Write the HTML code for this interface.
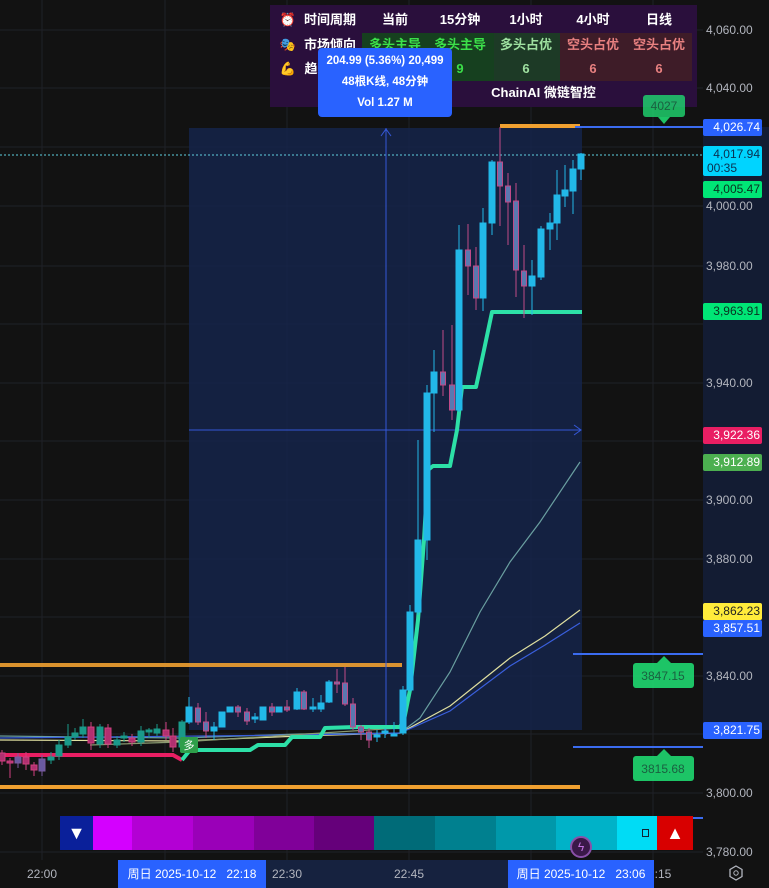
<!DOCTYPE html>
<html><head><meta charset="utf-8"><style>
body{margin:0;width:769px;height:888px;overflow:hidden;background:#121212;font-family:"Liberation Sans","Noto Sans CJK SC",sans-serif;position:relative}
.ax{position:absolute;left:706px;font-size:12px;color:#b2b5be}
.lb{position:absolute;left:703px;width:59px;height:17px;font-size:12px;line-height:17px;text-align:right;padding-right:2px;box-sizing:border-box;border-radius:2px}
.tb{position:absolute;left:270px;top:5px;width:427px;height:102px;background:#2a0f3c;color:#fff;font-weight:bold;font-size:13px}
.r{position:absolute;left:0;width:427px;height:24px;line-height:24px}
.r span{position:absolute;text-align:center;width:66px}
.seg{position:absolute;top:816px;height:34px}
</style></head><body>
<svg width="769" height="888" style="position:absolute;left:0;top:0">
<rect x="703" y="127" width="66" height="603" fill="#131c33"/>
<g stroke="#1f2128" stroke-width="1">
<line x1="42" y1="0" x2="42" y2="860"/><line x1="165" y1="0" x2="165" y2="860"/><line x1="287" y1="0" x2="287" y2="860"/><line x1="409" y1="0" x2="409" y2="860"/><line x1="531" y1="0" x2="531" y2="860"/><line x1="653" y1="0" x2="653" y2="860"/>
<line x1="0" y1="30" x2="703" y2="30"/><line x1="0" y1="88" x2="703" y2="88"/><line x1="0" y1="147" x2="703" y2="147"/><line x1="0" y1="206" x2="703" y2="206"/><line x1="0" y1="266" x2="703" y2="266"/><line x1="0" y1="324" x2="703" y2="324"/><line x1="0" y1="383" x2="703" y2="383"/><line x1="0" y1="441" x2="703" y2="441"/><line x1="0" y1="500" x2="703" y2="500"/><line x1="0" y1="559" x2="703" y2="559"/><line x1="0" y1="617" x2="703" y2="617"/><line x1="0" y1="676" x2="703" y2="676"/><line x1="0" y1="734" x2="703" y2="734"/><line x1="0" y1="793" x2="703" y2="793"/><line x1="0" y1="852" x2="703" y2="852"/>
</g>
<rect x="189" y="128" width="393" height="602" fill="#15254a" fill-opacity="0.85"/>
<line x1="0" y1="155" x2="703" y2="155" stroke="#5fd0e0" stroke-width="1" stroke-dasharray="2,2"/>
<line x1="0" y1="665" x2="402" y2="665" stroke="#f0a030" stroke-width="4" opacity="0.9"/>
<line x1="0" y1="787" x2="580" y2="787" stroke="#f0a030" stroke-width="4"/>
<line x1="500" y1="126" x2="580" y2="126" stroke="#f0a030" stroke-width="4"/>
<g stroke="#3b6cf0" stroke-width="2"><line x1="575" y1="127" x2="703" y2="127"/><line x1="573" y1="654" x2="703" y2="654"/><line x1="573" y1="747" x2="703" y2="747"/><line x1="680" y1="818" x2="703" y2="818"/></g>
<g stroke="#3558d8" stroke-width="1" fill="none"><line x1="386" y1="128" x2="386" y2="735"/><path d="M381,136 L386,129 L391,136"/><line x1="189" y1="430" x2="580" y2="430"/><path d="M574,425 L581,430 L574,435"/></g>
<g fill="none" stroke-width="1.2">
<path d="M0,736 L180,738 L300,734 L400,733 L420,718 L450,672 L480,612 L510,562 L540,522 L580,462" stroke="#6a9fa0"/>
<path d="M0,740 L180,741 L300,736 L400,733 L450,706 L510,658 L545,636 L580,610" stroke="#e0e0a0"/>
<path d="M0,738 L300,735 L400,733 L450,711 L510,666 L545,645 L580,623" stroke="#3a5fdc"/>
<path d="M90,745 L180,742 L400,728" stroke="#8a9a70"/>
</g>
<path d="M0,755 L173,755 L182,760" stroke="#e91e63" stroke-width="4" fill="none"/>
<path d="M182,760 L190,750 L250,750 L258,745 L285,745 L292,737 L320,737 L325,728 L355,727 L400,727 L404,720 L410,690 L418,620 L424,540 L428,470 L433,466 L450,466 L457,430 L462,387 L476,387 L484,350 L492,312 L582,312" stroke="#2de0a7" stroke-width="4" fill="none" stroke-linejoin="round"/>
<g stroke-width="1">
<g stroke="#d04080" fill="#b03070"><line x1="2" y1="750" x2="2" y2="765"/><rect x="-1" y="753" width="6" height="8"/><line x1="10" y1="758" x2="10" y2="778"/><rect x="7" y="761" width="6" height="2"/><line x1="26" y1="752" x2="26" y2="770"/><rect x="23" y="757" width="6" height="7"/><line x1="34" y1="762" x2="34" y2="776"/><rect x="31" y="765" width="6" height="5"/><line x1="91" y1="722" x2="91" y2="750"/><rect x="88" y="727" width="6" height="16"/><line x1="108" y1="724" x2="108" y2="748"/><rect x="105" y="728" width="6" height="16"/><line x1="132" y1="734" x2="132" y2="746"/><rect x="129" y="738" width="6" height="4"/><line x1="166" y1="722" x2="166" y2="740"/><rect x="163" y="730" width="6" height="6"/><line x1="173" y1="728" x2="173" y2="752"/><rect x="170" y="736" width="6" height="11"/></g>
<g stroke="#7a5aa0" fill="#6a5aa0"><line x1="18" y1="753" x2="18" y2="768"/><rect x="15" y="757" width="6" height="6"/><line x1="42" y1="755" x2="42" y2="776"/><rect x="39" y="759" width="6" height="12"/></g>
<g stroke="#1a9a8a" fill="#1a9a8a"><line x1="51" y1="752" x2="51" y2="764"/><rect x="48" y="757" width="6" height="3"/><line x1="59" y1="740" x2="59" y2="760"/><rect x="56" y="745" width="6" height="11"/><line x1="68" y1="724" x2="68" y2="748"/><rect x="65" y="737" width="6" height="8"/><line x1="75" y1="728" x2="75" y2="740"/><rect x="72" y="733" width="6" height="4"/><line x1="83" y1="719" x2="83" y2="738"/><rect x="80" y="727" width="6" height="7"/><line x1="100" y1="724" x2="100" y2="748"/><rect x="97" y="727" width="6" height="17"/><line x1="117" y1="736" x2="117" y2="748"/><rect x="114" y="740" width="6" height="5"/><line x1="124" y1="732" x2="124" y2="742"/><rect x="121" y="736" width="6" height="2"/><line x1="141" y1="726" x2="141" y2="746"/><rect x="138" y="731" width="6" height="11"/><line x1="149" y1="728" x2="149" y2="738"/><rect x="146" y="730" width="6" height="2"/><line x1="157" y1="724" x2="157" y2="736"/><rect x="154" y="729" width="6" height="4"/><line x1="182" y1="720" x2="182" y2="750"/><rect x="179" y="722" width="6" height="25"/></g>
<g stroke="#22b8e8" fill="#22b8e8"><line x1="189" y1="697" x2="189" y2="724"/><rect x="186" y="707" width="6" height="15"/><line x1="214" y1="722" x2="214" y2="740"/><rect x="211" y="727" width="6" height="4"/><line x1="222" y1="712" x2="222" y2="727"/><rect x="219" y="712" width="6" height="15"/><rect x="227" y="707" width="6" height="5"/><line x1="255" y1="713" x2="255" y2="723"/><rect x="252" y="717" width="6" height="2"/><line x1="263" y1="707" x2="263" y2="720"/><rect x="260" y="707" width="6" height="13"/><rect x="276" y="707" width="6" height="5"/><line x1="297" y1="688" x2="297" y2="710"/><rect x="294" y="692" width="6" height="17"/><line x1="313" y1="698" x2="313" y2="712"/><rect x="310" y="707" width="6" height="2"/><line x1="321" y1="695" x2="321" y2="712"/><rect x="318" y="703" width="6" height="6"/><line x1="329" y1="680" x2="329" y2="703"/><rect x="326" y="682" width="6" height="20"/><line x1="377" y1="730" x2="377" y2="742"/><rect x="374" y="735" width="6" height="2"/><line x1="385" y1="728" x2="385" y2="738"/><rect x="382" y="731" width="6" height="2"/><line x1="394" y1="722" x2="394" y2="736"/><rect x="391" y="734" width="6" height="2"/><line x1="403" y1="686" x2="403" y2="735"/><rect x="400" y="690" width="6" height="43"/><line x1="410" y1="605" x2="410" y2="692"/><rect x="407" y="612" width="6" height="78"/><line x1="418" y1="440" x2="418" y2="615"/><rect x="415" y="540" width="6" height="72"/><line x1="427" y1="385" x2="427" y2="560"/><rect x="424" y="393" width="6" height="147"/><line x1="434" y1="350" x2="434" y2="432"/><rect x="431" y="372" width="6" height="21"/><line x1="459" y1="225" x2="459" y2="412"/><rect x="456" y="250" width="6" height="160"/><line x1="483" y1="208" x2="483" y2="311"/><rect x="480" y="223" width="6" height="75"/><line x1="492" y1="160" x2="492" y2="235"/><rect x="489" y="162" width="6" height="61"/><line x1="532" y1="260" x2="532" y2="315"/><rect x="529" y="276" width="6" height="10"/><line x1="541" y1="226" x2="541" y2="280"/><rect x="538" y="229" width="6" height="48"/><line x1="550" y1="213" x2="550" y2="250"/><rect x="547" y="223" width="6" height="6"/><line x1="557" y1="170" x2="557" y2="240"/><rect x="554" y="195" width="6" height="28"/><line x1="565" y1="165" x2="565" y2="207"/><rect x="562" y="190" width="6" height="6"/><line x1="573" y1="160" x2="573" y2="214"/><rect x="570" y="169" width="6" height="22"/><line x1="581" y1="153" x2="581" y2="180"/><rect x="578" y="154" width="6" height="15"/></g>
<g stroke="#c04a88" fill="#5a78b0"><line x1="198" y1="703" x2="198" y2="725"/><rect x="195.5" y="708" width="5" height="14"/><line x1="206" y1="712" x2="206" y2="738"/><rect x="203.5" y="722" width="5" height="9"/><line x1="238" y1="705" x2="238" y2="717"/><rect x="235.5" y="707" width="5" height="5"/><line x1="247" y1="708" x2="247" y2="725"/><rect x="244.5" y="712" width="5" height="9"/><line x1="272" y1="703" x2="272" y2="716"/><rect x="269.5" y="707" width="5" height="5"/><line x1="287" y1="700" x2="287" y2="712"/><rect x="284.5" y="707" width="5" height="3"/><line x1="304" y1="690" x2="304" y2="710"/><rect x="301.5" y="692" width="5" height="17"/><line x1="337" y1="669" x2="337" y2="693"/><rect x="334.5" y="682" width="5" height="2"/><line x1="345" y1="667" x2="345" y2="706"/><rect x="342.5" y="683" width="5" height="21"/><line x1="353" y1="698" x2="353" y2="730"/><rect x="350.5" y="704" width="5" height="23"/><line x1="361" y1="725" x2="361" y2="740"/><rect x="358.5" y="727" width="5" height="5"/><line x1="369" y1="728" x2="369" y2="748"/><rect x="366.5" y="732" width="5" height="8"/><line x1="443" y1="330" x2="443" y2="396"/><rect x="440.5" y="372" width="5" height="13"/><line x1="452" y1="325" x2="452" y2="420"/><rect x="449.5" y="385" width="5" height="25"/><line x1="468" y1="224" x2="468" y2="295"/><rect x="465.5" y="250" width="5" height="16"/><line x1="476" y1="247" x2="476" y2="310"/><rect x="473.5" y="266" width="5" height="32"/><line x1="500" y1="127" x2="500" y2="226"/><rect x="497.5" y="162" width="5" height="24"/><line x1="508" y1="173" x2="508" y2="245"/><rect x="505.5" y="186" width="5" height="16"/><line x1="516" y1="183" x2="516" y2="297"/><rect x="513.5" y="201" width="5" height="69"/><line x1="524" y1="245" x2="524" y2="318"/><rect x="521.5" y="271" width="5" height="15"/></g>
</g>
<rect x="180" y="737" width="18" height="16" rx="2" fill="#2e9e4a"/>
<text x="189" y="749" fill="#fff" font-size="11" text-anchor="middle" font-family="Noto Sans CJK SC,sans-serif">多</text>
<g fill="#1fd870" fill-opacity="0.9"><path d="M658,117 L664,124 L670,117Z"/><rect x="633" y="663" width="61" height="25" rx="3"/><path d="M657,663 L664,656 L671,663Z"/><rect x="633" y="756" width="61" height="25" rx="3"/><path d="M657,756 L664,749 L671,756Z"/></g>
<g fill="#1a6040" font-size="12" text-anchor="middle" font-family="Liberation Sans,sans-serif"><text x="663" y="680">3847.15</text><text x="663" y="773">3815.68</text></g>
<rect x="0" y="860" width="703" height="28" fill="#121212"/>
<rect x="189" y="860" width="393" height="28" fill="#16223f"/>
<g fill="#b2b5be" font-size="12" text-anchor="middle" font-family="Liberation Sans,sans-serif"><text x="42" y="878">22:00</text><text x="287" y="878">22:30</text><text x="409" y="878">22:45</text><text x="663" y="878">:15</text></g>
<path d="M736,866 L742,869.5 L742,876.5 L736,880 L730,876.5 L730,869.5Z" fill="none" stroke="#b2b5be" stroke-width="1.3"/><circle cx="736" cy="873" r="2.2" fill="none" stroke="#b2b5be"/>
</svg>
<div class="ax" style="top:23px">4,060.00</div><div class="ax" style="top:81px">4,040.00</div><div class="ax" style="top:199px">4,000.00</div><div class="ax" style="top:259px">3,980.00</div><div class="ax" style="top:376px">3,940.00</div><div class="ax" style="top:493px">3,900.00</div><div class="ax" style="top:552px">3,880.00</div><div class="ax" style="top:669px">3,840.00</div><div class="ax" style="top:786px">3,800.00</div><div class="ax" style="top:845px">3,780.00</div>
<div class="lb" style="top:119px;background:#2962ff;color:#fff">4,026.74</div>
<div class="lb" style="top:146px;height:30px;line-height:14px;padding-top:1px;background:#00d4ff;color:#0a3050">4,017.94<br><span style="display:block;text-align:left;padding-left:4px">00:35</span></div>
<div class="lb" style="top:181px;background:#00e676;color:#0a3020">4,005.47</div>
<div class="lb" style="top:303px;background:#00e676;color:#0a3020">3,963.91</div>
<div class="lb" style="top:427px;background:#e91e63;color:#fff">3,922.36</div>
<div class="lb" style="top:454px;background:#4caf50;color:#fff">3,912.89</div>
<div class="lb" style="top:603px;background:#ffeb3b;color:#222">3,862.23</div>
<div class="lb" style="top:620px;background:#2962ff;color:#fff">3,857.51</div>
<div class="lb" style="top:722px;background:#2962ff;color:#fff">3,821.75</div>
<div class="tb">
<div class="r" style="top:3px"><span style="left:8px;width:20px">⏰</span><span style="left:26px;width:68px">时间周期</span><span style="left:92px">当前</span><span style="left:157px">15分钟</span><span style="left:223px">1小时</span><span style="left:290px">4小时</span><span style="left:356px">日线</span></div>
<div style="position:absolute;top:28px;left:92px;width:132px;height:48px;background:#16401f"></div>
<div style="position:absolute;top:28px;left:224px;width:66px;height:48px;background:#1d3a26"></div>
<div style="position:absolute;top:28px;left:290px;width:132px;height:48px;background:#3e1c28"></div>
<div class="r" style="top:28px"><span style="left:8px;width:20px">🎭</span><span style="left:26px;width:68px">市场倾向</span><span style="left:92px;color:#3ce04a">多头主导</span><span style="left:157px;color:#3ce04a">多头主导</span><span style="left:223px;color:#9ee0a0">多头占优</span><span style="left:290px;color:#e88080">空头占优</span><span style="left:356px;color:#e88080">空头占优</span></div>
<div class="r" style="top:52px"><span style="left:8px;width:20px">💪</span><span style="left:26px;width:30px">趋</span><span style="left:157px;color:#3ce04a">9</span><span style="left:223px;color:#9ee0a0">6</span><span style="left:290px;color:#e88080">6</span><span style="left:356px;color:#e88080">6</span></div>
<div class="r" style="top:76px;text-align:center;left:60px">ChainAI 微链智控</div>
</div>
<div style="position:absolute;left:643px;top:95px;width:42px;height:22px;border-radius:3px;background:rgba(31,216,112,0.8);color:#1a6040;font-size:12px;line-height:22px;text-align:center">4027</div>
<div style="position:absolute;left:318px;top:48px;width:134px;height:69px;background:#2962ff;border-radius:4px;color:#fff;font-size:11.5px;font-weight:bold;text-align:center;line-height:21px;padding-top:3px;box-sizing:border-box">204.99 (5.36%) 20,499<br>48根K线, 48分钟<br>Vol 1.27 M</div>
<div class="seg" style="left:60px;width:33px;background:#0a209a;color:#fff;text-align:center;line-height:34px;font-size:18px">▼</div>
<div class="seg" style="left:93px;width:39px;background:#d400ff"></div>
<div class="seg" style="left:132px;width:61px;background:#b300d4"></div>
<div class="seg" style="left:193px;width:61px;background:#9a00b8"></div>
<div class="seg" style="left:254px;width:60px;background:#800099"></div>
<div class="seg" style="left:314px;width:60px;background:#65007a"></div>
<div class="seg" style="left:374px;width:61px;background:#006b78"></div>
<div class="seg" style="left:435px;width:61px;background:#00808f"></div>
<div class="seg" style="left:496px;width:60px;background:#0098aa"></div>
<div class="seg" style="left:556px;width:61px;background:#00b2c8"></div>
<div class="seg" style="left:617px;width:40px;background:#00dcf5"><div style="position:absolute;left:25px;top:13px;width:5px;height:6px;border:1px solid #123"></div></div>
<div class="seg" style="left:657px;width:36px;background:#d80000;color:#fff;text-align:center;line-height:34px;font-size:18px">▲</div>
<div style="position:absolute;left:570px;top:836px;width:18px;height:18px;border-radius:50%;background:#3a1848;border:2px solid #8a50a8;color:#c070e0;font-size:12px;text-align:center;line-height:18px">ϟ</div>
<div style="position:absolute;left:118px;top:860px;width:148px;height:28px;background:#2962ff;color:#fff;font-size:12px;line-height:28px;text-align:center">周日 2025-10-12 &nbsp; 22:18</div>
<div style="position:absolute;left:508px;top:860px;width:146px;height:28px;background:#2962ff;color:#fff;font-size:12px;line-height:28px;text-align:center">周日 2025-10-12 &nbsp; 23:06</div>
</body></html>
